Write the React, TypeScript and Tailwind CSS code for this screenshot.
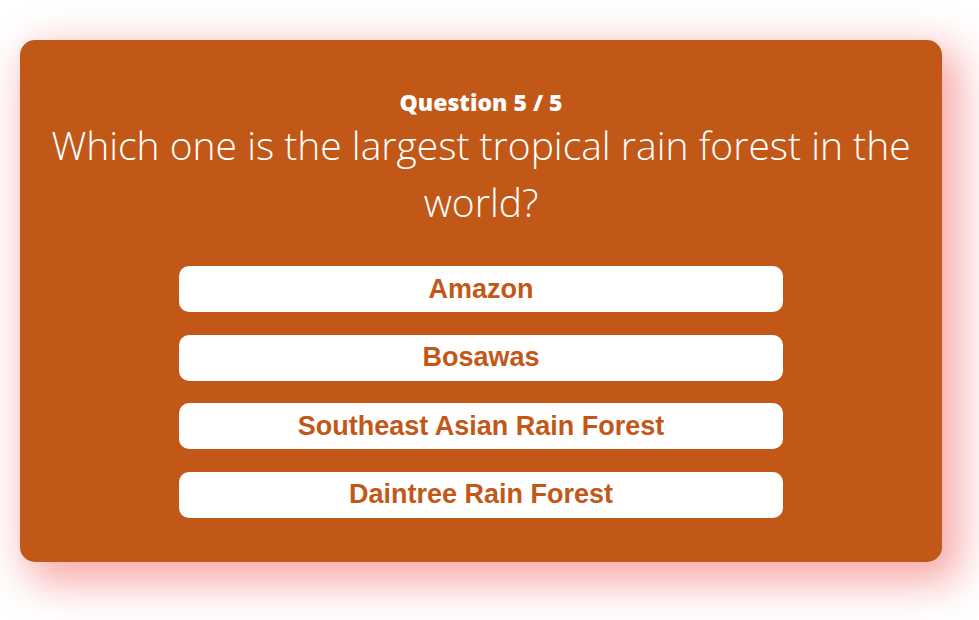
const answers = [
  "Amazon",
  "Bosawas",
  "Southeast Asian Rain Forest",
  "Daintree Rain Forest",
];

export default function App() {
  return (
    <div className="min-h-[620px] bg-white pt-[40px] pl-[20px]">
      <div className="w-[922px] rounded-[15px] bg-[#c25818] px-[20px] pt-[50px] pb-[44px] text-center text-white shadow-[12px_14px_42px_6px_rgba(240,60,60,0.45)]">
        <div className="text-[23px] leading-[24px] font-extrabold font-['Open_Sans',sans-serif]">
          Question 5 / 5
        </div>
        <div className="mt-[2px] text-[39px] leading-[57px] font-light font-['Open_Sans',sans-serif]">
          Which one is the largest tropical rain forest in the world?
        </div>
        <div className="mt-[36px] flex flex-col items-center gap-[22.5px]">
          {answers.map((a) => (
            <button
              key={a}
              className="h-[46px] w-[604px] rounded-[10px] bg-white text-[27px] font-bold text-[#c25818] font-['Liberation_Sans',Arial,sans-serif]"
            >
              {a}
            </button>
          ))}
        </div>
      </div>
    </div>
  );
}
